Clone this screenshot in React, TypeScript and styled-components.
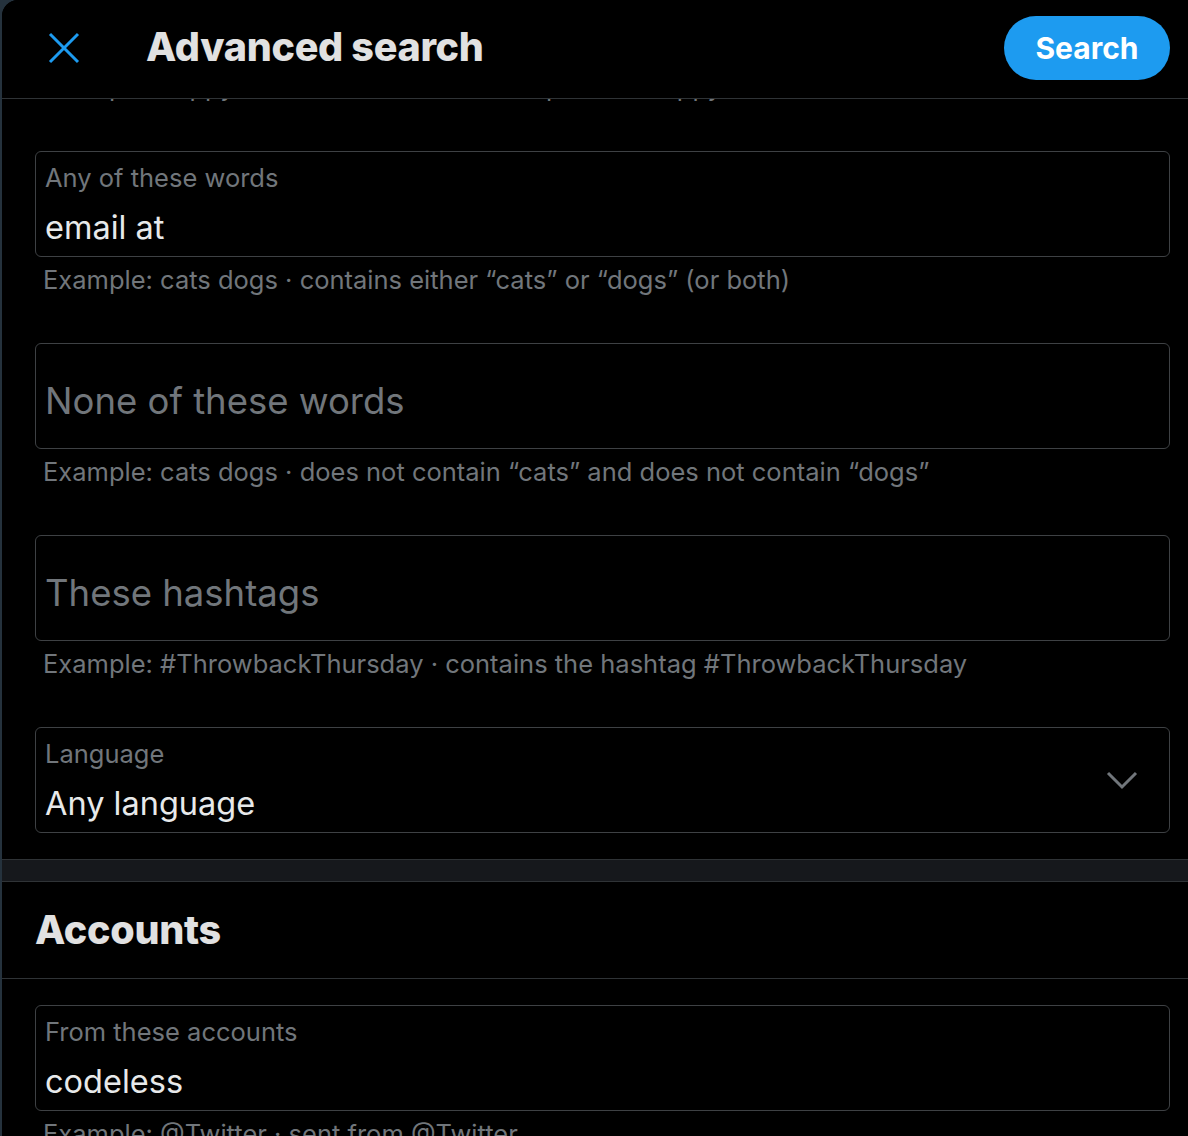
import React from "react";
import styled, { createGlobalStyle } from "styled-components";

const GlobalStyle = createGlobalStyle`
  html, body {
    margin: 0;
    padding: 0;
    background: #25323d;
    overflow: hidden;
  }
  * {
    box-sizing: border-box;
  }
`;

interface FieldProps {
  label?: string;
  value?: string;
  placeholder?: string;
  hint?: string;
  select?: boolean;
}

const fields: FieldProps[] = [
  {
    label: "Any of these words",
    value: "email at",
    hint: "Example: cats dogs · contains either “cats” or “dogs” (or both)",
  },
  {
    placeholder: "None of these words",
    hint: "Example: cats dogs · does not contain “cats” and does not contain “dogs”",
  },
  {
    placeholder: "These hashtags",
    hint: "Example: #ThrowbackThursday · contains the hashtag #ThrowbackThursday",
  },
  { label: "Language", value: "Any language", select: true },
];

const Field = ({ label, value, placeholder, hint, select }: FieldProps) => (
  <FieldGroup>
    <Box>
      {placeholder ? (
        <Placeholder>{placeholder}</Placeholder>
      ) : (
        <>
          <Label>{label}</Label>
          <Value>{value}</Value>
        </>
      )}
      {select && (
        <Chevron viewBox="0 0 32 20">
          <path d="M2 2 L16 16 L30 2" />
        </Chevron>
      )}
    </Box>
    {hint && <Hint>{hint}</Hint>}
  </FieldGroup>
);

export default function App() {
  return (
    <>
      <GlobalStyle />
      <Modal>
        <Header>
          <CloseButton aria-label="Close">
            <svg width="32" height="32" viewBox="0 0 32 32">
              <path d="M2 2 L30 30 M30 2 L2 30" />
            </svg>
          </CloseButton>
          <Title>Advanced search</Title>
          <SearchButton>Search</SearchButton>
        </Header>
        <Scroller>
          {/* previous hint, scrolled mostly under the header */}
          <PeekLine>
            Example: happy hour · contains the exact phrase “happy hour”
          </PeekLine>
          <Section $padTop={49}>
            {fields.map((f) => (
              <Field key={f.label || f.placeholder} {...f} />
            ))}
          </Section>
          <Divider />
          <SectionTitle>Accounts</SectionTitle>
          <Section $padTop={26}>
            <Field
              label="From these accounts"
              value="codeless"
              hint="Example: @Twitter · sent from @Twitter"
            />
          </Section>
        </Scroller>
      </Modal>
    </>
  );
}

const Modal = styled.div`
  margin-left: 2px;
  height: 1136px;
  background: #000;
  border-top-left-radius: 16px;
  overflow: hidden;
  display: flex;
  flex-direction: column;
  font-family: Inter, "Liberation Sans", sans-serif;
  color: #e7e9ea;
`;

const Header = styled.div`
  height: 99px;
  flex-shrink: 0;
  display: flex;
  align-items: center;
  padding: 0 18px 0 46px;
  border-bottom: 1px solid #2f3336;
  position: relative;
  z-index: 1;
  background: #000;
`;

const CloseButton = styled.div`
  width: 32px;
  height: 32px;
  display: flex;
  margin-top: -3px;

  svg path {
    stroke: #1d9bf0;
    stroke-width: 3;
    fill: none;
  }
`;

const Title = styled.div`
  margin-left: 66px;
  flex: 1;
  font-size: 39.5px;
  font-weight: 800;
  letter-spacing: -0.3px;
  color: #e1e1e1;
  margin-top: -4px;
`;

const SearchButton = styled.div`
  width: 166px;
  height: 64px;
  border-radius: 32px;
  background: #1d9bf0;
  color: #fff;
  font-size: 30px;
  font-weight: 700;
  display: flex;
  align-items: center;
  justify-content: center;
  margin-top: -2px;
`;

const Scroller = styled.div`
  flex: 1;
  overflow: hidden;
`;

const PeekLine = styled.div`
  margin-top: -27px;
  padding-left: 41px;
  height: 30px;
  line-height: 30px;
  font-size: 25.5px;
  color: #71767b;
  white-space: nowrap;
`;

const Section = styled.div<{ $padTop: number }>`
  padding: ${(p) => p.$padTop}px 18px 0 33px;
`;

const FieldGroup = styled.div`
  margin-bottom: 48px;

  &:last-child {
    margin-bottom: 26px;
  }
`;

const Box = styled.div`
  position: relative;
  height: 106px;
  border: 1px solid #3e4144;
  border-radius: 6px;
  padding: 11px 9px;
  display: flex;
  flex-direction: column;
`;

const Label = styled.div`
  font-size: 25.5px;
  line-height: 30px;
  color: #71767b;
`;

const Value = styled.div`
  margin-top: 15px;
  font-size: 32.5px;
  line-height: 40px;
  color: #e7e9ea;
`;

const Placeholder = styled.div`
  margin-top: 24px;
  font-size: 36.5px;
  line-height: 44px;
  color: #71767b;
`;

const Chevron = styled.svg`
  position: absolute;
  right: 31px;
  top: 43px;
  width: 32px;
  height: 20px;

  path {
    stroke: #71767b;
    stroke-width: 3;
    fill: none;
  }
`;

const Hint = styled.div`
  margin-top: 8px;
  padding-left: 8px;
  font-size: 25.5px;
  line-height: 30px;
  color: #71767b;
  white-space: nowrap;
`;

const Divider = styled.div`
  height: 23px;
  background: #16181c;
  border-top: 1px solid #2f3336;
  border-bottom: 1px solid #2f3336;
`;

const SectionTitle = styled.div`
  height: 97px;
  display: flex;
  align-items: center;
  padding-left: 33px;
  border-bottom: 1px solid #2f3336;
  font-size: 39.5px;
  font-weight: 800;
  letter-spacing: -0.3px;
  color: #e1e1e1;
`;
